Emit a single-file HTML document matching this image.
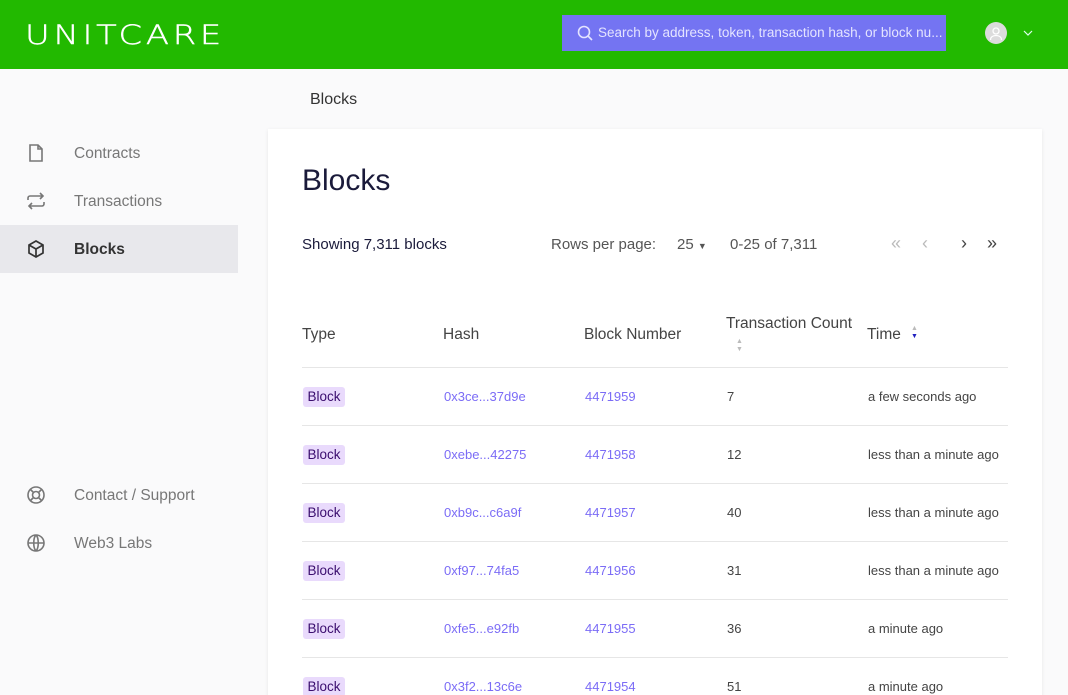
<!DOCTYPE html>
<html style="overflow:hidden"><head><meta charset="utf-8"><style>
*{box-sizing:border-box;margin:0;padding:0}
body{width:1068px;height:695px;overflow:hidden;background:#fafafb;font-family:"Liberation Sans",sans-serif;position:relative}
.top{position:absolute;left:0;top:0;width:1068px;height:69px;background:#22b900}
.logo{position:absolute;left:25px;top:22px;color:#fff;font-size:27px;letter-spacing:3px;font-family:"DejaVu Sans",sans-serif;font-weight:200;line-height:28px;transform:scaleX(1.25);transform-origin:left;-webkit-text-stroke:0.4px #fff}
.search{position:absolute;left:562px;top:15px;width:384px;height:36px;background:#7474f2;color:#e4e4ff;font-size:13.5px;line-height:36px;padding-left:36px;white-space:nowrap;overflow:hidden}
.search svg{position:absolute;left:15px;top:10px}
.av{position:absolute;left:985px;top:22px;width:22px;height:22px;border-radius:50%;background:#dcdcdc}
.side a{position:absolute;left:0;width:238px;height:48px;color:#777;font-size:15.5px;line-height:50px;padding-left:74px;text-decoration:none}
.side svg{position:absolute;left:26px;top:14px}
.side a.act{background:#e8e8ec;color:#333;font-weight:bold}
.crumb{position:absolute;left:310px;top:91px;font-size:16px;color:#333}
.card{position:absolute;left:268px;top:129px;width:774px;height:600px;background:#fff;box-shadow:0 1px 4px rgba(0,0,0,.08)}
h1{position:absolute;left:302px;top:164px;font-size:30px;font-weight:normal;color:#1a1a3a}
.t{position:absolute;font-size:15px;color:#555}
.pg{position:absolute;top:233px;font-size:18px}
.th{position:absolute;top:326px;font-size:15.5px;color:#444}
.line{position:absolute;left:302px;width:706px;height:1px;background:#e6e6e6}
.c{position:absolute;font-size:13px;color:#444}
.lk{color:#7b6cf6}
.bd{position:absolute;left:303px;width:42px;height:20px;background:#e9dafc;color:#3a0d6e;border-radius:3px;font-size:13.5px;line-height:20px;text-align:center}
</style></head><body>
<div class="top"><div class="logo">UNITCARE</div>
<div class="search"><svg width="16" height="16" viewBox="0 0 16 16" fill="none" stroke="#e4e4ff" stroke-width="1.6"><circle cx="7" cy="7" r="5.5"/><path d="M11 11l4 4"/></svg>Search by address, token, transaction hash, or block nu...</div>
<div class="av"><svg width="22" height="22" viewBox="0 0 22 22" fill="none" stroke="#fff" stroke-width="1.3"><circle cx="11" cy="9" r="3"/><path d="M5.5 18c0-3 2.5-4.5 5.5-4.5s5.5 1.5 5.5 4.5"/></svg></div>
<svg style="position:absolute;left:1023px;top:29px" width="10" height="8" viewBox="0 0 10 8" fill="none" stroke="#dfe" stroke-width="1.2"><path d="M1 2l4 4 4-4"/></svg>
</div>
<div class="side">
<a style="top:129px"><svg width="20" height="20" viewBox="0 0 20 20" fill="none" stroke="#777" stroke-width="1.6"><path d="M4 2h8l4 4v12H4z"/><path d="M12 2v4h4"/></svg>Contracts</a>
<a style="top:177px"><svg width="20" height="20" viewBox="0 0 20 20" fill="none" stroke="#777" stroke-width="1.6"><path d="M2 9V7a2 2 0 012-2h13M14 2l3 3-3 3M18 11v2a2 2 0 01-2 2H3M6 18l-3-3 3-3"/></svg>Transactions</a>
<a class="act" style="top:225px"><svg width="20" height="20" viewBox="0 0 20 20" fill="none" stroke="#333" stroke-width="1.7"><path d="M10 2l7 4v8l-7 4-7-4V6z"/><path d="M3 6l7 4 7-4M10 10v8"/></svg>Blocks</a>
<a style="top:471px"><svg width="20" height="20" viewBox="0 0 20 20" fill="none" stroke="#777" stroke-width="1.6"><circle cx="10" cy="10" r="8"/><circle cx="10" cy="10" r="3.5"/><path d="M4.5 4.5l3 3M15.5 4.5l-3 3M4.5 15.5l3-3M15.5 15.5l-3-3"/></svg>Contact / Support</a>
<a style="top:519px"><svg width="20" height="20" viewBox="0 0 20 20" fill="none" stroke="#777" stroke-width="1.6"><circle cx="10" cy="10" r="8"/><path d="M2 10h16M10 2c-3 3-3 13 0 16M10 2c3 3 3 13 0 16"/></svg>Web3 Labs</a>
</div>
<div class="crumb">Blocks</div>
<div class="card"></div>
<h1>Blocks</h1>
<div class="t" style="left:302px;top:236px;color:#1a1a3a">Showing 7,311 blocks</div>
<div class="t" style="left:551px;top:236px">Rows per page:</div>
<div class="t" style="left:677px;top:236px">25 <span style="font-size:9px">▼</span></div>
<div class="t" style="left:730px;top:236px">0-25 of 7,311</div>
<div class="pg" style="left:891px;color:#bbb">«</div>
<div class="pg" style="left:922px;color:#bbb">‹</div>
<div class="pg" style="left:961px;color:#444">›</div>
<div class="pg" style="left:987px;color:#444">»</div>
<div class="th" style="left:302px">Type</div>
<div class="th" style="left:443px">Hash</div>
<div class="th" style="left:584px">Block Number</div>
<div class="th" style="left:726px;top:315px">Transaction Count</div>
<div style="position:absolute;left:736px;top:338px;font-size:7px;color:#bbb;line-height:8px">▲<br>▼</div>
<div class="th" style="left:867px">Time</div>
<div style="position:absolute;left:911px;top:325px;font-size:7px;color:#bbb;line-height:8px">▲<br><span style="color:#2020c0">▼</span></div>
<div class="line" style="top:367px"></div>
<div class="bd" style="top:387px">Block</div><div class="c lk" style="left:444px;top:389px">0x3ce...37d9e</div><div class="c lk" style="left:585px;top:389px">4471959</div><div class="c" style="left:727px;top:389px">7</div><div class="c" style="left:868px;top:389px">a few seconds ago</div>
<div class="line" style="top:425px"></div>
<div class="bd" style="top:445px">Block</div><div class="c lk" style="left:444px;top:447px">0xebe...42275</div><div class="c lk" style="left:585px;top:447px">4471958</div><div class="c" style="left:727px;top:447px">12</div><div class="c" style="left:868px;top:447px">less than a minute ago</div>
<div class="line" style="top:483px"></div>
<div class="bd" style="top:503px">Block</div><div class="c lk" style="left:444px;top:505px">0xb9c...c6a9f</div><div class="c lk" style="left:585px;top:505px">4471957</div><div class="c" style="left:727px;top:505px">40</div><div class="c" style="left:868px;top:505px">less than a minute ago</div>
<div class="line" style="top:541px"></div>
<div class="bd" style="top:561px">Block</div><div class="c lk" style="left:444px;top:563px">0xf97...74fa5</div><div class="c lk" style="left:585px;top:563px">4471956</div><div class="c" style="left:727px;top:563px">31</div><div class="c" style="left:868px;top:563px">less than a minute ago</div>
<div class="line" style="top:599px"></div>
<div class="bd" style="top:619px">Block</div><div class="c lk" style="left:444px;top:621px">0xfe5...e92fb</div><div class="c lk" style="left:585px;top:621px">4471955</div><div class="c" style="left:727px;top:621px">36</div><div class="c" style="left:868px;top:621px">a minute ago</div>
<div class="line" style="top:657px"></div>
<div class="bd" style="top:677px">Block</div><div class="c lk" style="left:444px;top:679px">0x3f2...13c6e</div><div class="c lk" style="left:585px;top:679px">4471954</div><div class="c" style="left:727px;top:679px">51</div><div class="c" style="left:868px;top:679px">a minute ago</div>
</body></html>
